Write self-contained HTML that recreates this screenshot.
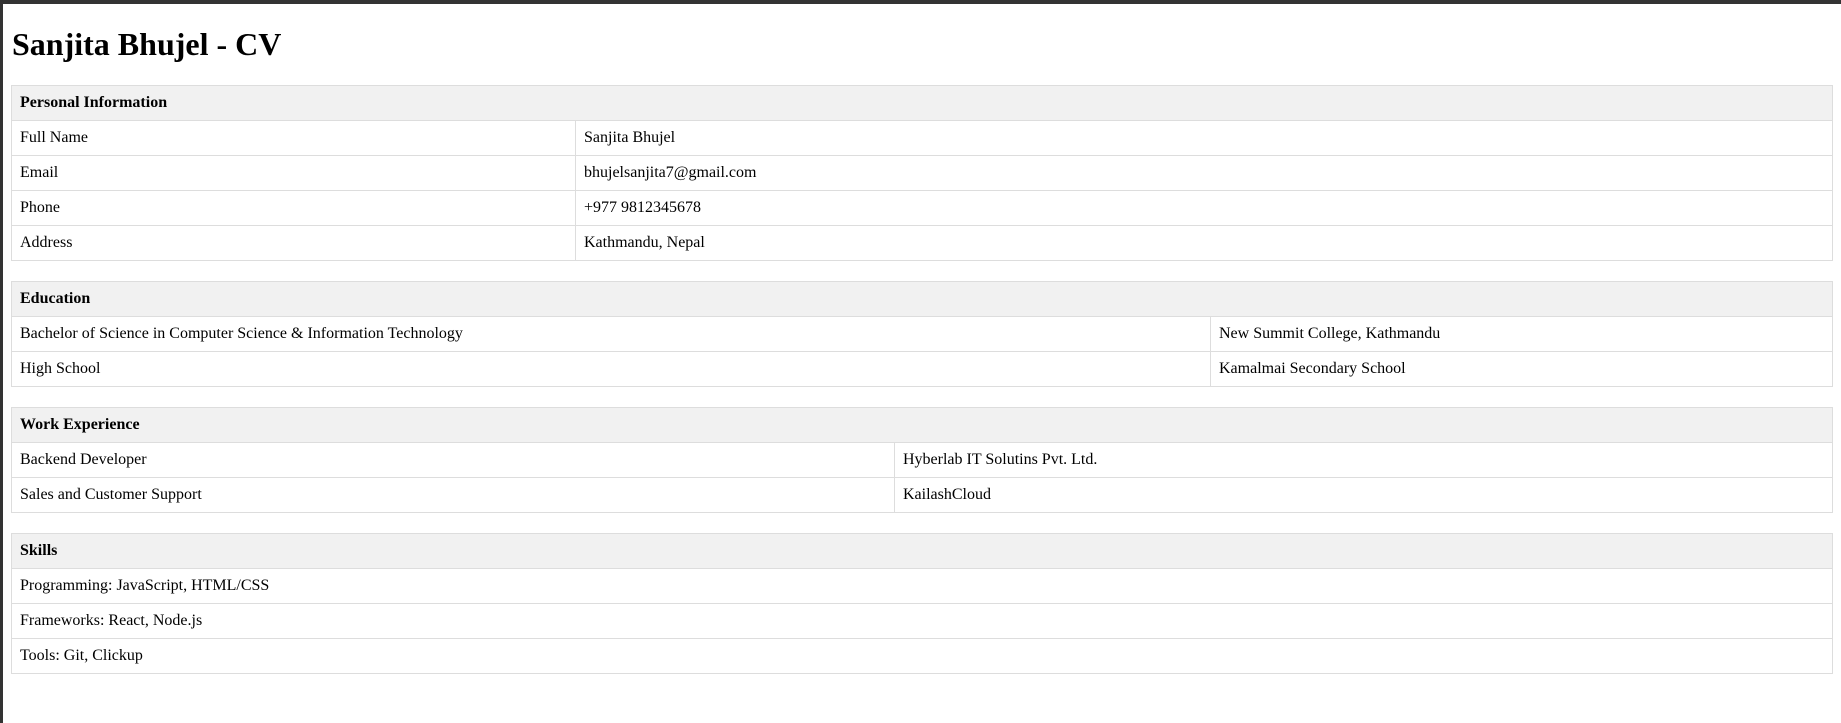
<!DOCTYPE html>
<html><head><meta charset="utf-8">
<style>
html,body{margin:0;padding:0;background:#fff;}
body{font-family:"Liberation Serif",serif;font-size:16px;color:#000;position:relative;width:1841px;height:723px;overflow:hidden;}
.topbar{position:absolute;left:0;top:0;width:1841px;height:4px;background:#333;}
.leftbar{position:absolute;left:0;top:0;width:3px;height:723px;background:#333;}
.wrap{position:absolute;left:11px;top:4px;width:1822px;}
h1{font-size:32px;margin:22px 0 22px 0;line-height:37px;font-weight:bold;margin-left:1px;}
table{border-collapse:collapse;width:1822px;margin:0 0 20px 0;}
th,td{border:1px solid #ddd;padding:8px 8px;text-align:left;line-height:18px;}
th{background:#f1f1f1;font-weight:bold;}
</style></head><body>
<div class="topbar"></div><div class="leftbar"></div>
<div class="wrap">
<h1>Sanjita Bhujel - CV</h1>
<table>
<tr><th colspan="2">Personal Information</th></tr>
<tr><td style="width:547px">Full Name</td><td>Sanjita Bhujel</td></tr>
<tr><td>Email</td><td>bhujelsanjita7@gmail.com</td></tr>
<tr><td>Phone</td><td>+977 9812345678</td></tr>
<tr><td>Address</td><td>Kathmandu, Nepal</td></tr>
</table>
<table>
<tr><th colspan="2">Education</th></tr>
<tr><td style="width:1182px">Bachelor of Science in Computer Science &amp; Information Technology</td><td>New Summit College, Kathmandu</td></tr>
<tr><td>High School</td><td>Kamalmai Secondary School</td></tr>
</table>
<table>
<tr><th colspan="2">Work Experience</th></tr>
<tr><td style="width:866px">Backend Developer</td><td>Hyberlab IT Solutins Pvt. Ltd.</td></tr>
<tr><td>Sales and Customer Support</td><td>KailashCloud</td></tr>
</table>
<table>
<tr><th>Skills</th></tr>
<tr><td>Programming: JavaScript, HTML/CSS</td></tr>
<tr><td>Frameworks: React, Node.js</td></tr>
<tr><td>Tools: Git, Clickup</td></tr>
</table>
</div>
</body></html>
